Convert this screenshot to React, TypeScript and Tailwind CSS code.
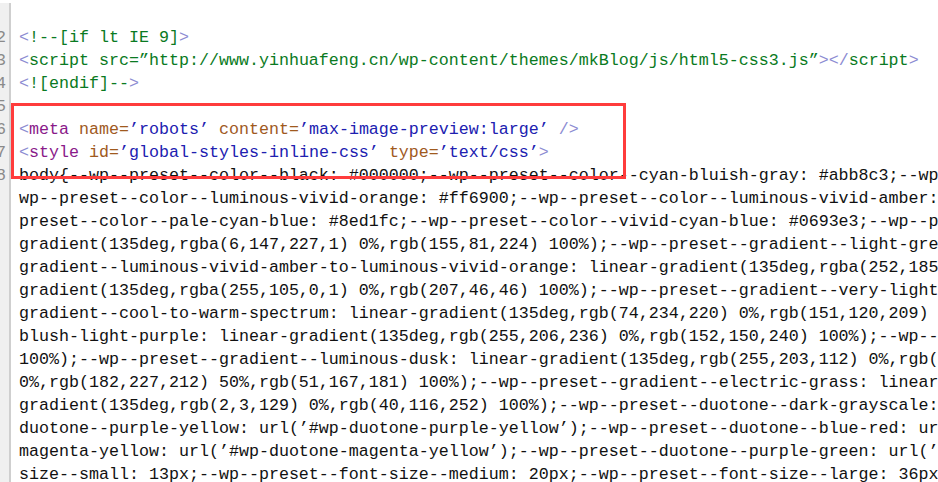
const B = 'text-[#8c8cd2]';
const G = 'text-[#0a7a22]';
const P = 'text-[#8a1a8a]';
const A = 'text-[#a05a1e]';
const V = 'text-[#2020b0]';

type Seg = [string, string];

const head: { n: number | null; segs: Seg[] }[] = [
  { n: null, segs: [] },
  { n: 2, segs: [[B, '<'], [G, '!--[if lt IE 9]'], [B, '>']] },
  {
    n: 3,
    segs: [
      [B, '<'],
      [G, 'script src=”http://www.yinhuafeng.cn/wp-content/themes/mkBlog/js/html5-css3.js”'],
      [B, '></'],
      [G, 'script'],
      [B, '>'],
    ],
  },
  { n: 4, segs: [[B, '<'], [G, '![endif]--'], [B, '>']] },
  { n: 5, segs: [] },
  {
    n: 6,
    segs: [
      [B, '<'],
      [P, 'meta '],
      [A, 'name='],
      [V, '’robots’ '],
      [A, 'content='],
      [V, '’max-image-preview:large’ '],
      [B, '/>'],
    ],
  },
  {
    n: 7,
    segs: [
      [B, '<'],
      [P, 'style '],
      [A, 'id='],
      [V, '’global-styles-inline-css’ '],
      [A, 'type='],
      [V, '’text/css’'],
      [B, '>'],
    ],
  },
];

const body = [
  'body{--wp--preset--color--black: #000000;--wp--preset--color--cyan-bluish-gray: #abb8c3;--wp--',
  'wp--preset--color--luminous-vivid-orange: #ff6900;--wp--preset--color--luminous-vivid-amber: #f',
  'preset--color--pale-cyan-blue: #8ed1fc;--wp--preset--color--vivid-cyan-blue: #0693e3;--wp--pre',
  'gradient(135deg,rgba(6,147,227,1) 0%,rgb(155,81,224) 100%);--wp--preset--gradient--light-green',
  'gradient--luminous-vivid-amber-to-luminous-vivid-orange: linear-gradient(135deg,rgba(252,185,0',
  'gradient(135deg,rgba(255,105,0,1) 0%,rgb(207,46,46) 100%);--wp--preset--gradient--very-light-g',
  'gradient--cool-to-warm-spectrum: linear-gradient(135deg,rgb(74,234,220) 0%,rgb(151,120,209) 20',
  'blush-light-purple: linear-gradient(135deg,rgb(255,206,236) 0%,rgb(152,150,240) 100%);--wp--pr',
  '100%);--wp--preset--gradient--luminous-dusk: linear-gradient(135deg,rgb(255,203,112) 0%,rgb(19',
  '0%,rgb(182,227,212) 50%,rgb(51,167,181) 100%);--wp--preset--gradient--electric-grass: linear-g',
  'gradient(135deg,rgb(2,3,129) 0%,rgb(40,116,252) 100%);--wp--preset--duotone--dark-grayscale: u',
  'duotone--purple-yellow: url(’#wp-duotone-purple-yellow’);--wp--preset--duotone--blue-red: url(',
  'magenta-yellow: url(’#wp-duotone-magenta-yellow’);--wp--preset--duotone--purple-green: url(’#w',
  'size--small: 13px;--wp--preset--font-size--medium: 20px;--wp--preset--font-size--large: 36px;--',
];

function Row({ n, children }: { n: number | null; children?: React.ReactNode }) {
  return (
    <div className="flex h-[23px] items-center">
      <div className="w-[9px] h-full shrink-0 overflow-hidden bg-[#f0f0f0] flex items-center justify-end pr-[3px] text-[#8a8a8a]">
        {n !== null && <span>{n}</span>}
      </div>
      <div className="w-[2px] h-full shrink-0 bg-[#cfcfcf]" />
      <div className="pl-[8px] whitespace-pre overflow-hidden">{children}</div>
    </div>
  );
}

export default function App() {
  return (
    <div className="relative w-[938px] h-[482px] overflow-hidden bg-white font-['Liberation_Mono',monospace] text-[16.67px] leading-[23px] text-[#111]">
      <div className="flex flex-col pt-[3px]">
        {head.map((line, i) => (
          <Row key={i} n={line.n}>
            {line.segs.map(([c, t], j) => (
              <span key={j} className={c}>
                {t}
              </span>
            ))}
          </Row>
        ))}
        {body.map((t, i) => (
          <Row key={'b' + i} n={i === 0 ? 8 : null}>
            {t}
          </Row>
        ))}
      </div>
      <div className="absolute left-[11px] top-[103px] w-[615px] h-[76px] border-[3px] border-[#ff3c3c]" />
    </div>
  );
}
